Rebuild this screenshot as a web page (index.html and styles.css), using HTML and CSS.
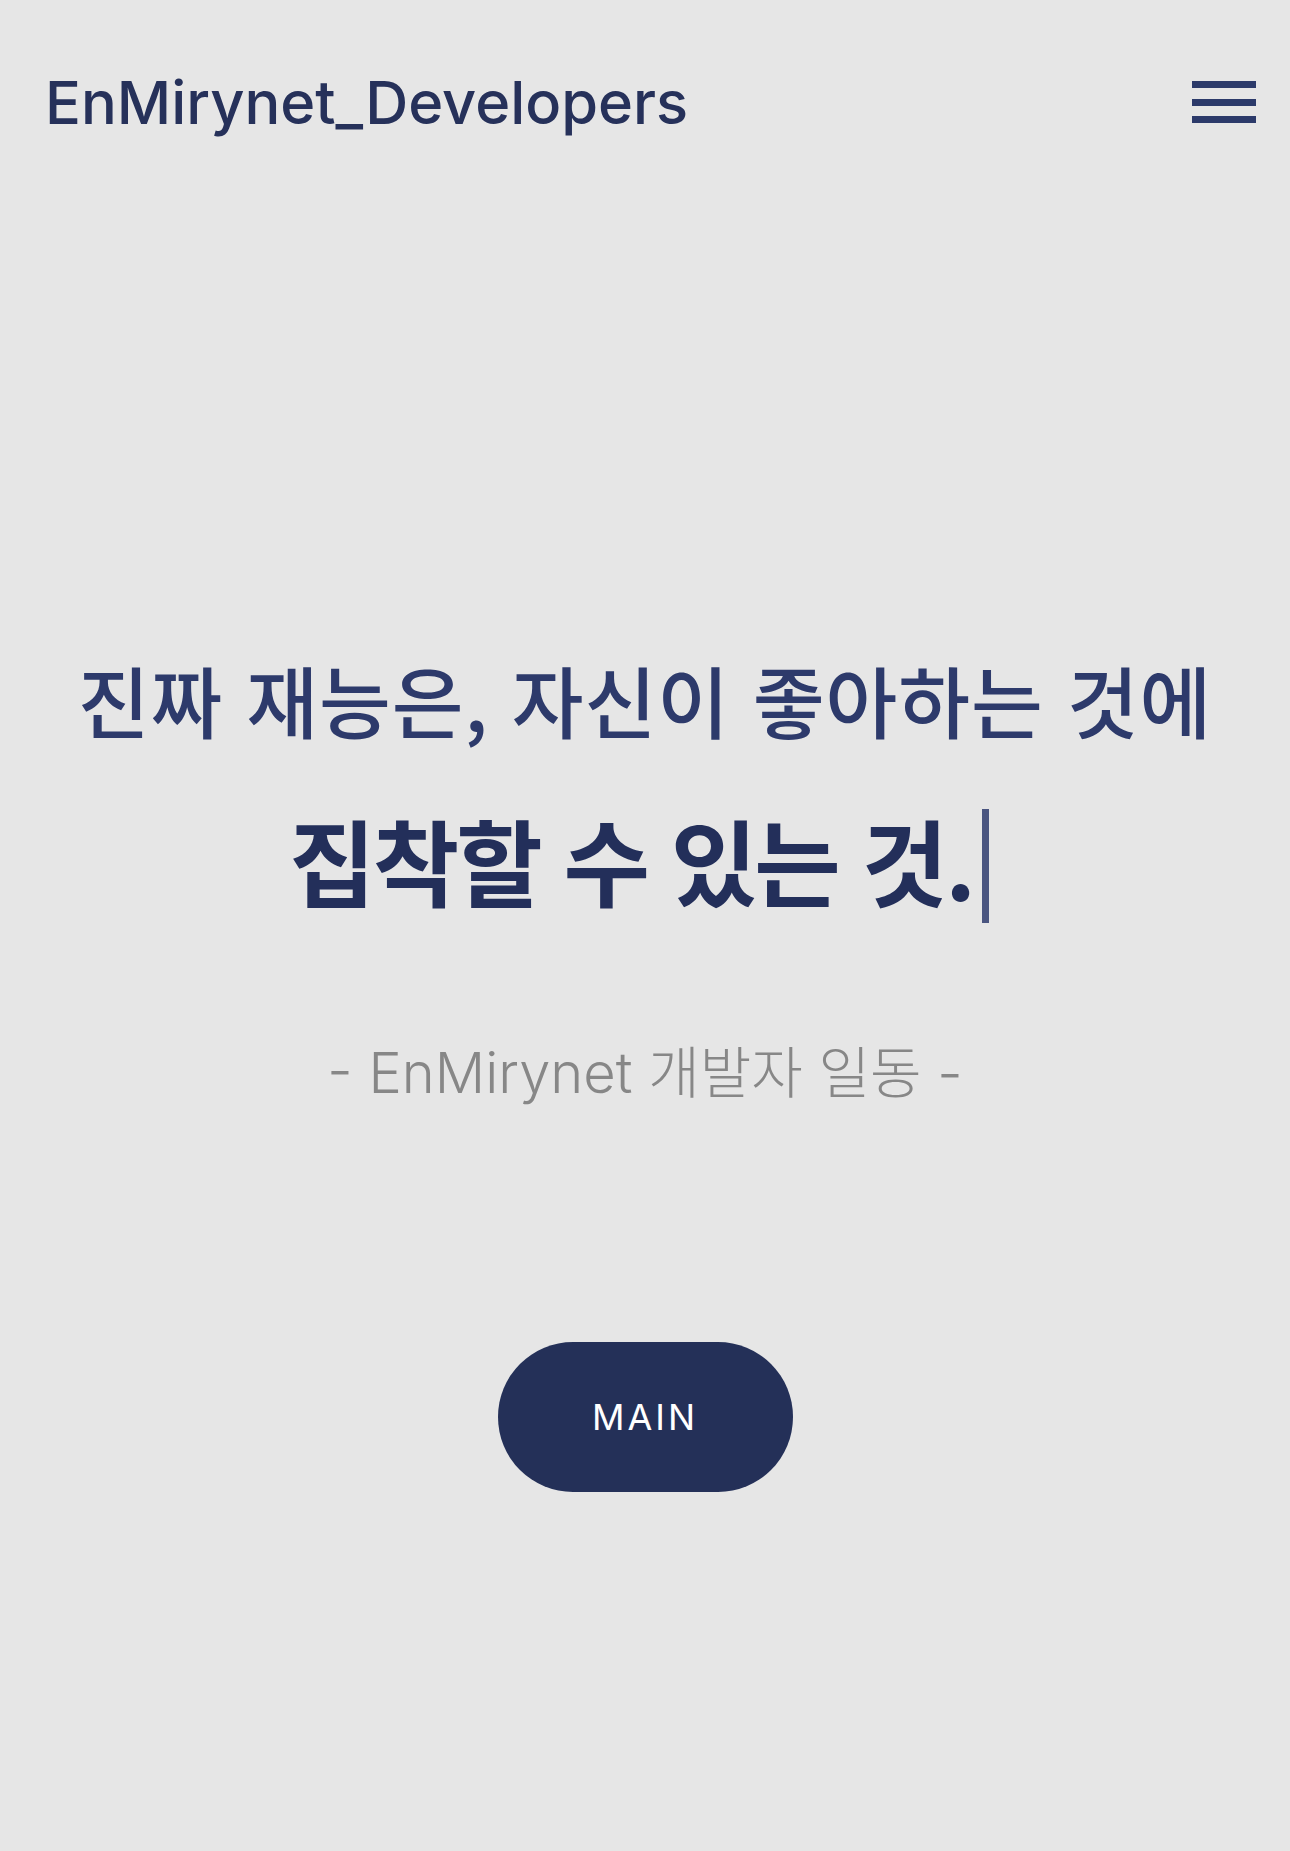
FILE: index.html
```html
<!DOCTYPE html>
<html lang="ko">
<head>
<meta charset="utf-8">
<title>EnMirynet_Developers</title>
<link rel="stylesheet" href="styles.css">
</head>
<body>
<header class="topbar">
  <div class="brand">EnMirynet_Developers</div>
  <button class="menu" aria-label="menu">
    <span class="bar"></span><span class="bar"></span><span class="bar"></span>
  </button>
</header>
<main class="hero">
  <p class="line1">진짜 재능은, 자신이 좋아하는 것에</p>
  <p class="line2"><span>집착할 수 있는 것.</span><span class="caret"></span></p>
  <p class="sign">- EnMirynet 개발자 일동 -</p>
  <a class="main-btn" href="#">MAIN</a>
</main>
</body>
</html>
```
FILE: styles.css
```css
html, body {
  margin: 0;
  padding: 0;
}
body {
  background: #e6e6e6;
  min-height: 1851px;
  font-family: Inter, "Noto Sans CJK KR", sans-serif;
}
.topbar {
  height: 204px;
  display: flex;
  align-items: center;
  justify-content: space-between;
  padding: 0 34px 0 45px;
  box-sizing: border-box;
}
.brand {
  font-size: 59.6px;
  font-weight: 500;
  color: #26315a;
}
.menu {
  background: none;
  border: 0;
  padding: 0;
  width: 64px;
  display: flex;
  flex-direction: column;
  gap: 10.5px;
}
.bar {
  display: block;
  height: 7px;
  width: 64px;
  background: #2c3a6a;
}
.hero {
  display: flex;
  flex-direction: column;
  align-items: center;
  text-align: center;
}
.line1 {
  margin: 445px 0 0;
  font-family: "Noto Sans CJK KR", sans-serif;
  font-size: 78px;
  font-weight: 500;
  line-height: 100px;
  letter-spacing: 1px;
  color: #2d3a6b;
  white-space: nowrap;
}
.line2 {
  margin: 46px 0 0;
  font-family: "Noto Sans CJK KR", sans-serif;
  font-size: 94px;
  font-weight: 700;
  line-height: 120px;
  letter-spacing: -0.03em;
  color: #232f5a;
  display: flex;
  align-items: center;
  gap: 9px;
  white-space: nowrap;
}
.caret {
  display: block;
  width: 7px;
  height: 114px;
  margin-top: 14px;
  margin-right: 12px;
  background: #4a5580;
}
.sign {
  margin: 105px 0 0;
  font-family: Inter, "Noto Sans CJK KR", sans-serif;
  font-size: 56px;
  font-weight: 300;
  color: #878787;
}
.main-btn {
  margin-top: 233px;
  width: 295px;
  height: 150px;
  border-radius: 75px;
  background: #243058;
  color: #fff;
  display: flex;
  align-items: center;
  justify-content: center;
  text-decoration: none;
  font-size: 36px;
  letter-spacing: 3px;
  font-weight: 400;
}
```
